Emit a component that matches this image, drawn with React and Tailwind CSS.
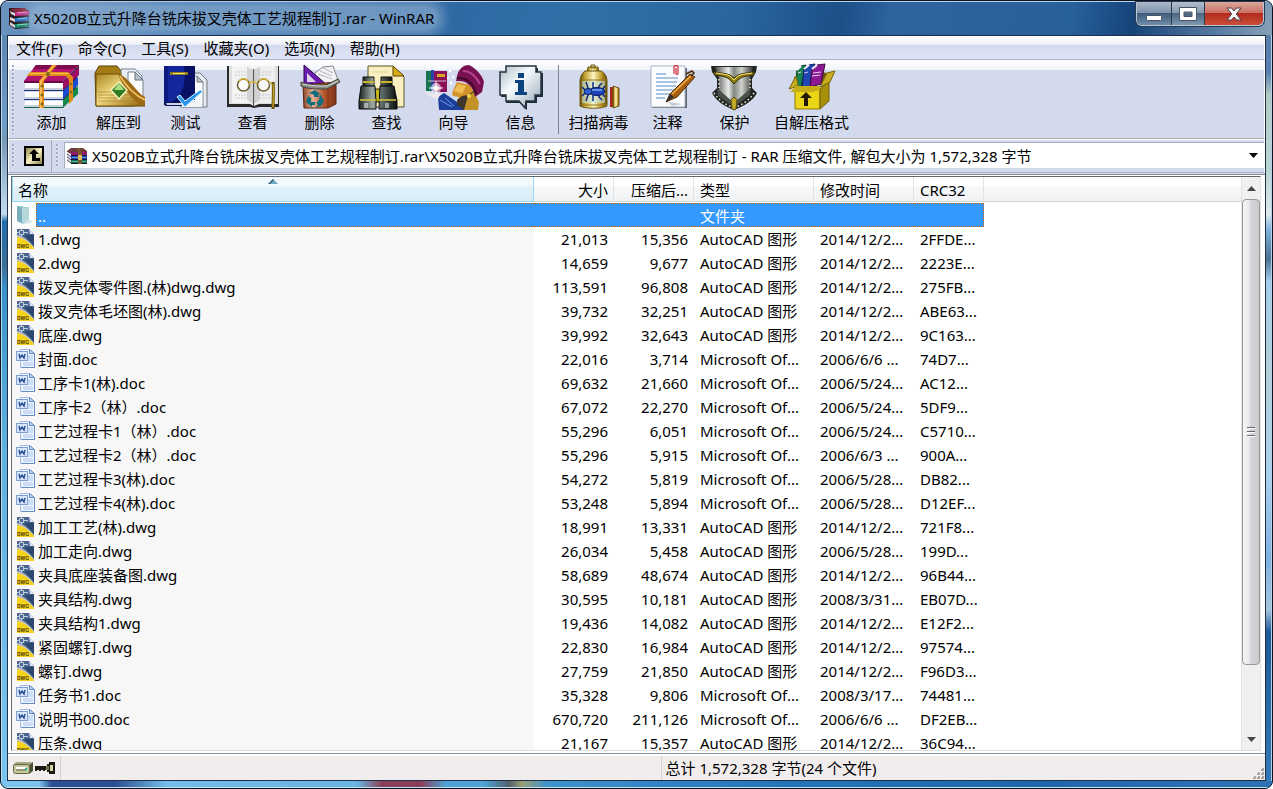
const ARCHIVE = "X5020B立式升降台铣床拔叉壳体工艺规程制订";

const menus = ["文件(F)", "命令(C)", "工具(S)", "收藏夹(O)", "选项(N)", "帮助(H)"];

const CAD = "AutoCAD 图形";
const WORD = "Microsoft Of...";

const files = [
  ["1.dwg", "21,013", "15,356", CAD, "2014/12/2...", "2FFDE..."],
  ["2.dwg", "14,659", "9,677", CAD, "2014/12/2...", "2223E..."],
  ["拨叉壳体零件图.(林)dwg.dwg", "113,591", "96,808", CAD, "2014/12/2...", "275FB..."],
  ["拨叉壳体毛坯图(林).dwg", "39,732", "32,251", CAD, "2014/12/2...", "ABE63..."],
  ["底座.dwg", "39,992", "32,643", CAD, "2014/12/2...", "9C163..."],
  ["封面.doc", "22,016", "3,714", WORD, "2006/6/6 ...", "74D7..."],
  ["工序卡1(林).doc", "69,632", "21,660", WORD, "2006/5/24...", "AC12..."],
  ["工序卡2（林）.doc", "67,072", "22,270", WORD, "2006/5/24...", "5DF9..."],
  ["工艺过程卡1（林）.doc", "55,296", "6,051", WORD, "2006/5/24...", "C5710..."],
  ["工艺过程卡2（林）.doc", "55,296", "5,915", WORD, "2006/6/3 ...", "900A..."],
  ["工艺过程卡3(林).doc", "54,272", "5,819", WORD, "2006/5/28...", "DB82..."],
  ["工艺过程卡4(林).doc", "53,248", "5,894", WORD, "2006/5/28...", "D12EF..."],
  ["加工工艺(林).dwg", "18,991", "13,331", CAD, "2014/12/2...", "721F8..."],
  ["加工走向.dwg", "26,034", "5,458", CAD, "2006/5/28...", "199D..."],
  ["夹具底座装备图.dwg", "58,689", "48,674", CAD, "2014/12/2...", "96B44..."],
  ["夹具结构.dwg", "30,595", "10,181", CAD, "2008/3/31...", "EB07D..."],
  ["夹具结构1.dwg", "19,436", "14,082", CAD, "2014/12/2...", "E12F2..."],
  ["紧固螺钉.dwg", "22,830", "16,984", CAD, "2014/12/2...", "97574..."],
  ["螺钉.dwg", "27,759", "21,850", CAD, "2014/12/2...", "F96D3..."],
  ["任务书1.doc", "35,328", "9,806", WORD, "2008/3/17...", "74481..."],
  ["说明书00.doc", "670,720", "211,126", WORD, "2006/6/6 ...", "DF2EB..."],
  ["压条.dwg", "21,167", "15,357", CAD, "2014/12/2...", "36C94..."],
];

const tools = [
  { label: "添加", icon: AddIcon, width: "w-[67px]" },
  { label: "解压到", icon: ExtractIcon, width: "w-[67px]" },
  { label: "测试", icon: TestIcon, width: "w-[67px]" },
  { label: "查看", icon: ViewIcon, width: "w-[67px]" },
  { label: "删除", icon: DeleteIcon, width: "w-[67px]" },
  { label: "查找", icon: FindIcon, width: "w-[67px]" },
  { label: "向导", icon: WizardIcon, width: "w-[67px]" },
  { label: "信息", icon: InfoIcon, width: "w-[67px]" },
];

const extraTools = [
  { label: "扫描病毒", icon: VirusIcon, width: "w-[71px]" },
  { label: "注释", icon: CommentIcon, width: "w-[67px]" },
  { label: "保护", icon: ProtectIcon, width: "w-[67px]" },
  { label: "自解压格式", icon: SfxIcon, width: "w-[87px]" },
];

export default function App() {
  return (
    <div className="h-screen bg-white">
      <div className="flex h-full flex-col overflow-hidden rounded-lg border border-[#0b1420] bg-[#2a659f] font-['Noto_Sans','Noto_Sans_CJK_SC',sans-serif] text-[15px] leading-6 text-black">
        <TitleBar />
        <div className="flex min-h-0 flex-1">
          <div className="w-1.5 border-l border-[#b9dcf2] bg-[linear-gradient(180deg,#5d86b3_0%,#6f9cc6_12%,#7899b5_14%,#c3dbee_24%,#1f6dab_25%,#3e6f94_31%,#3a90c8_34%,#5fb1de_55%,#7cc3ee_100%)]" />
          <Client />
          <div className="w-1.5 border-r border-[#b5d0e6] bg-[linear-gradient(180deg,#5b80ab_0%,#5a7fb0_5%,#b2cbc4_8%,#b9d5d4_18%,#dfe9ea_24%,#7fb4dc_26%,#4d7391_30%,#a5cdea_33%,#b2cfd6_45%,#a9cfec_60%,#7fb0e0_70%,#a5c5dc_77%,#1c5a98_80%,#3478b8_100%)]" />
        </div>
        <div className="h-[7px] shrink-0 border-b border-[#c5e2f3] bg-[linear-gradient(90deg,#7cc3ee_0%,#7cc3ee_3%,#2c4e92_4%,#2c4e92_9%,#74bde8_13%,#68b5e0_28%,#8a3f58_30%,#8a3f58_33%,#4ea4d6_35%,#4ea4d6_38%,#555f6a_40%,#9a9f77_41%,#3d93cb_43%,#2474b9_62%,#1f67ab_82%,#2f72b4_100%)]" />
      </div>
    </div>
  );
}

function TitleBar() {
  return (
    <header className="flex h-[34px] shrink-0 items-start border-t border-[#bcd3e8] bg-[linear-gradient(100deg,#6c93bf_0%,#5d8abb_4%,#3e75ae_14%,#2e69a4_36%,#2f70a9_45%,#2a659f_58%,#1d4f88_66%,#2e639f_70%,#28609c_84%,#164379_89%,#5d7fa5_96%,#86a0b8_100%)]">
      <div className="flex h-8 min-w-0 flex-1 items-center pl-2">
        <BooksIcon />
        <h1 className="truncate rounded-xl bg-[#a7c2dc]/50 pl-1 pr-1 shadow-[0_0_12px_6px_rgba(167,194,220,0.5)]">{ARCHIVE}.rar - WinRAR</h1>
      </div>
      <div className="mr-2 flex h-6 overflow-hidden rounded-b-md border border-t-0 border-[#b9c7d6] shadow-[0_0_0_1px_#26394f]">
        <button aria-label="最小化" className="flex w-[35px] items-center justify-center border-r border-[#26394f] bg-[linear-gradient(180deg,#aab9c9_0%,#7f95ad_46%,#3f5b7b_50%,#6f8ca9_100%)]">
          <svg width="18" height="18" viewBox="0 0 18 18"><rect x="1.500" y="10.500" width="15" height="5" rx="1" fill="#fff" stroke="#4a5668" /></svg>
        </button>
        <button aria-label="最大化" className="flex w-[33px] items-center justify-center border-r border-[#26394f] bg-[linear-gradient(180deg,#b3c0cd_0%,#8598ad_46%,#4b6582_50%,#7f98b0_100%)]">
          <svg width="18" height="16" viewBox="0 0 18 16"><path d="M.5 1.500h17v13H.5zM5 6v4.500h8V6z" fill="#fff" fillRule="evenodd" stroke="#4a5668" /></svg>
        </button>
        <button aria-label="关闭" className="flex w-[58px] items-center justify-center bg-[linear-gradient(180deg,#dba79c_0%,#cb7163_46%,#b32b1c_50%,#c94f3a_100%)]">
          <svg width="16" height="16" viewBox="0 0 16 16"><path d="M1 2h4.500L8 5l2.500-3H15l-4.700 6L15 14h-4.500L8 11l-2.500 3H1l4.700-6z" fill="#f7f7f7" stroke="#52424a" /></svg>
        </button>
      </div>
    </header>
  );
}

function Client() {
  return (
    <div className="flex min-w-0 flex-1 flex-col border border-[#1d3048] bg-[#d4daed]">
      <nav className="flex h-6 shrink-0 gap-[15px] border-x border-b border-x-white border-b-[#aab1cb] bg-[linear-gradient(180deg,#ffffff_0%,#eef1f8_36%,#d4daed_40%,#e0e5f5_100%)] pl-[7px]">
        {menus.map((name) => (
          <button key={name} className="leading-6">{name}</button>
        ))}
      </nav>
      <Toolbar />
      <AddressBar />
      <FileList />
      <StatusBar />
    </div>
  );
}

function Grip() {
  return <div className="my-1 w-1 shrink-0 bg-[radial-gradient(circle_at_1px_1px,#a3abc4_1px,#ffffff_1px,transparent_2px)] bg-[length:4px_4px]" />;
}

function Toolbar() {
  return (
    <div className="flex h-[79px] shrink-0 border-x border-b border-t border-x-white border-b-[#a9a9ae] border-t-white bg-[linear-gradient(180deg,#ffffff_0%,#f0f4fa_11%,#d4daed_12%,#d4daed_100%)] pl-[3px]" role="toolbar">
      <Grip />
      <div className="w-0.5" />
      {tools.map((tool) => <ToolButton key={tool.label} {...tool} />)}
      <div className="mx-1 my-1 w-px bg-[#7e838f]" />
      {extraTools.map((tool) => <ToolButton key={tool.label} {...tool} />)}
    </div>
  );
}

function ToolButton({ label, icon: Icon, width }) {
  return (
    <button className={`flex shrink-0 flex-col items-center pt-[3px] ${width}`}>
      <svg width="56" height="46" viewBox="0 0 56 46" overflow="visible" aria-hidden="true">
        <Icon />
      </svg>
      <span className="whitespace-nowrap leading-6">{label}</span>
    </button>
  );
}

function AddressBar() {
  return (
    <div className="flex h-[34px] shrink-0 border border-b-[#aab1cb] border-x-white border-t-white pl-[3px]">
      <Grip />
      <div className="flex w-9 items-center justify-center border-r border-[#a9a9b4]">
        <button aria-label="向上一级" className="h-5 w-5 border-2 border-black bg-[linear-gradient(135deg,#8b8446,#f7f1c4,#8b8446)]">
          <svg width="16" height="16" viewBox="0 0 16 16"><path d="M8 1L3 6h3v7h8v-3h-4V6h3z" fill="#000" /></svg>
        </button>
      </div>
      <div className="ml-1 flex"><Grip /></div>
      <label className="relative mb-1 ml-1 mt-0.5 flex min-w-0 flex-1 items-center border-l border-t border-[#a8aec2] bg-white pl-0.5">
        <span className="shrink-0"><ArchiveIcon /></span>
        <select className="h-full min-w-0 flex-1 appearance-none bg-white pl-1 pr-6 leading-6" aria-label="路径">
          <option>{`${ARCHIVE}.rar\\${ARCHIVE} - RAR 压缩文件, 解包大小为 1,572,328 字节`}</option>
        </select>
        <svg className="pointer-events-none absolute right-1.5" width="9" height="5" viewBox="0 0 9 5"><path d="M0 0h9L4.500 5z" /></svg>
      </label>
    </div>
  );
}

function FileList() {
  return (
    <main className="mt-px flex min-h-0 flex-1 border-t border-[#8a8f98] bg-white pb-0.5 pl-[3px] pr-1 pt-px">
      <div className="flex min-w-0 flex-1 border border-[#63676e] border-b-[#dedede] border-r-[#e3e3e3]">
        <div className="min-w-0 flex-1 overflow-hidden bg-[linear-gradient(90deg,#f7f7f7_522px,#ffffff_522px)]">
          <table className="w-full table-fixed border-collapse">
            <colgroup>
              <col className="w-[522px]" />
              <col className="w-[80px]" />
              <col className="w-[80px]" />
              <col className="w-[120px]" />
              <col className="w-[100px]" />
              <col className="w-[70px]" />
              <col />
            </colgroup>
            <thead>
              <tr className="text-left">
                <th className="relative bg-white p-0 pb-px font-normal">
                  <div className="h-[25px] border-x border-b border-[#96d9f9] bg-[linear-gradient(180deg,#f2f9fc_0%,#f2f9fc_38%,#e1f1f9_40%,#d8ecf6_100%)] pl-[5px] leading-[26px]">名称</div>
                  <svg className="absolute left-64 top-0.5" width="10" height="5" viewBox="0 0 10 5"><path d="M0 5L5 0l5 5z" fill="#6bacc8" /><path d="M0 5L5 0l1 1-4 4z" fill="#3c5e72" /></svg>
                </th>
                <HeadCell className="pr-[5px] text-right">大小</HeadCell>
                <HeadCell className="pr-[5px] text-right">压缩后...</HeadCell>
                <HeadCell className="pl-1.5">类型</HeadCell>
                <HeadCell className="pl-1.5">修改时间</HeadCell>
                <HeadCell className="pl-1.5">CRC32</HeadCell>
                <td className="bg-white p-0 pb-px"><div className="h-[25px] border-b border-[#d5d5d5] bg-[linear-gradient(180deg,#ffffff_0%,#ffffff_38%,#f7f8fa_40%,#f1f2f4_100%)]" /></td>
              </tr>
            </thead>
            <tbody>
              <tr className="text-white">
                <td className="p-0">
                  <div className="flex h-6 bg-white pl-1">
                    <span className="w-5 pt-0.5"><FolderIcon /></span>
                    <span className="flex-1 border border-r-0 border-dotted border-[#cc6600] bg-[#3399ff] pl-px leading-6">..</span>
                  </div>
                </td>
                <SelectedCell />
                <SelectedCell />
                <SelectedCell>文件夹</SelectedCell>
                <SelectedCell />
                <SelectedCell last />
                <td />
              </tr>
              {files.map(([name, size, packed, type, date, crc]) => (
                <tr key={name} className="h-6 whitespace-nowrap">
                  <td className="p-0">
                    <div className="flex h-6 pl-1">
                      <span className="w-5 pt-0.5">{name.endsWith(".dwg") ? <DwgIcon /> : <DocIcon />}</span>
                      <span className="pl-0.5">{name}</span>
                    </div>
                  </td>
                  <td className="p-0 pr-1.5 text-right">{size}</td>
                  <td className="p-0 pr-1.5 text-right">{packed}</td>
                  <td className="p-0 pl-1.5">{type}</td>
                  <td className="p-0 pl-1.5">{date}</td>
                  <td className="p-0 pl-1.5">{crc}</td>
                  <td />
                </tr>
              ))}
            </tbody>
          </table>
        </div>
        <ScrollBar />
      </div>
    </main>
  );
}

function HeadCell({ children, className }) {
  return (
    <th className="bg-white p-0 pb-px font-normal">
      <div className={`h-[25px] whitespace-nowrap border-b border-r border-b-[#d5d5d5] border-r-[#e2e3e5] bg-[linear-gradient(180deg,#ffffff_0%,#ffffff_38%,#f7f8fa_40%,#f1f2f4_100%)] leading-[26px] ${className}`}>{children}</div>
    </th>
  );
}

function SelectedCell({ children, last = false }) {
  return (
    <td className="p-0">
      <div className={`h-6 border-y border-dotted border-[#cc6600] bg-[#3399ff] pl-1.5 leading-6 ${last ? "border-r" : ""}`}>{children}</div>
    </td>
  );
}

function ScrollBar() {
  return (
    <div className="flex w-[19px] shrink-0 flex-col border-l border-[#e3e3e3] bg-[#f0f0f0]">
      <button aria-label="向上滚动" className="flex h-[22px] shrink-0 items-center justify-center">
        <svg width="9" height="5" viewBox="0 0 9 5"><path d="M0 5L4.500 0 9 5z" fill="#444" /></svg>
      </button>
      <div className="flex min-h-0 flex-1 flex-col">
        <div className="flex basis-[88%] items-center justify-center rounded-sm border border-[#979797] bg-[linear-gradient(90deg,#f6f6f6_0%,#e9e9ea_40%,#d5d5d9_45%,#c9c9cf_100%)]">
          <svg width="8" height="10" viewBox="0 0 8 10"><path d="M0 .5h8M0 4.500h8M0 8.500h8" stroke="#666" /><path d="M0 1.500h8M0 5.500h8M0 9.500h8" stroke="#fff" /></svg>
        </div>
      </div>
      <button aria-label="向下滚动" className="flex h-[22px] shrink-0 items-center justify-center">
        <svg width="9" height="5" viewBox="0 0 9 5"><path d="M0 0h9L4.500 5z" fill="#444" /></svg>
      </button>
    </div>
  );
}

function StatusBar() {
  return (
    <footer className="flex h-[27px] shrink-0 border-t border-[#8a8f98] bg-[#f0edec]">
      <div className="flex flex-1 border-t-2 border-white">
        <div className="flex w-[53px] items-center gap-0.5 border-r border-[#d5d2d1] pl-[5px]">
          <svg className="shrink-0" width="20" height="14" viewBox="0 0 20 14"><path d="M3 1h16l-3 3H0z" fill="#a5a883" /><path d="M16 4l4-3v9l-4 3z" fill="#4f5335" /><rect x=".5" y="3.500" width="16" height="9" rx="2" fill="#c5c9a0" stroke="#62663f" /><path d="M3 7h10" stroke="#fff" strokeWidth="2" /><path d="M3 9h10" stroke="#62663f" /><path d="M12 8h2" stroke="#1fb39c" strokeWidth="2" /></svg>
          <svg className="shrink-0" width="20" height="12" viewBox="0 0 20 12"><path d="M0 4h12v4h-2v1H8V8H6v1H4V8H2v1H0z" fill="#1b1a10" /><path d="M12 2h2V0h6v12h-6v-2h-2z" fill="#1b1a10" /><path d="M15 3h3v6h-3z" fill="#d9d3a8" /><path d="M11 4h3v4h-3z" fill="#777250" /></svg>
        </div>
        <div className="flex-1 basis-0 border-r border-[#d5d2d1]" />
        <div className="flex flex-1 basis-0 items-end justify-between pl-1">
          <span>总计 1,572,328 字节(24 个文件)</span>
          <svg width="12" height="12" viewBox="0 0 12 12" fill="#aaa5a4"><path d="M8 0h3v3H8zM4 4h3v3H4zM8 4h3v3H8zM0 8h3v3H0zM4 8h3v3H4zM8 8h3v3H8z" /><path d="M8 0h1v1H8zM4 4h1v1H4zM8 4h1v1H8zM0 8h1v1H0zM4 8h1v1H4zM8 8h1v1H8z" fill="#fff" /></svg>
        </div>
      </div>
    </footer>
  );
}

/* Small icons */

function BooksIcon() {
  return (
    <svg className="shrink-0" width="21" height="21" viewBox="0 0 21 21" aria-hidden="true">
      <path d="M0 0l15 0 5 3v17l-14 1-6-4z" fill="#2a1a20" />
      <path d="M1 1l14-1 5 3L6 4z" fill="#8a2a3a" />
      <path d="M6 4l14-1v4L6 8z" fill="#c8257f" />
      <path d="M8 5l10-1" stroke="#f4a0cc" />
      <path d="M6 10l14-1v4L6 14z" fill="#1f6cb8" />
      <path d="M8 11l10-1" stroke="#8cc9f2" />
      <path d="M6 16l14-1v4L6 20z" fill="#15876c" />
      <path d="M8 17l10-1" stroke="#7be0c0" />
      <path d="M1 3l5 2v3L2 6zm0 6l5 2v3l-5-2zm0 5l5 3v3l-5-3z" fill="#d9d1d3" />
    </svg>
  );
}

function ArchiveIcon() {
  return (
    <svg width="21" height="16" viewBox="0 0 21 16" aria-hidden="true">
      <path d="M0 3l4-3h12l4 3v3H4L0 4z" fill="#6d3a3e" />
      <path d="M4 4h16v3H4z" fill="#8e1a6b" />
      <path d="M4 7h16v4H4z" fill="#2346b8" />
      <path d="M4 11h16v5H4z" fill="#147247" />
      <path d="M0 4l4 2v9l-4-3z" fill="#e9e4ec" />
      <path d="M0 6l4 3M0 9l4 3M0 12l4 3" stroke="#4b4566" />
      <path d="M4 7.500h16M4 11.500h16M4 15.500h16" stroke="#1a1430" />
      <path d="M5 9.500h14M5 13.500h14" stroke="#69c2e5" strokeWidth=".7" />
      <path d="M9 0h4l2 4v12h-4V4z" fill="#7b5930" />
      <path d="M11 7h4v5h-4z" fill="#e3ba5b" />
    </svg>
  );
}

function FolderIcon() {
  return (
    <svg width="17" height="20" viewBox="0 0 17 20" aria-hidden="true">
      <path d="M1 1h5l1 1h5v14l-5 3-6-3z" fill="#8fbfca" />
      <path d="M5 3l8-1v14l-6 3-2-2z" fill="#b4d7dc" />
      <path d="M1 1l5 3v14l-5-2z" fill="#78aebb" />
      <path d="M13 14l3 2-1 2-7 1z" fill="#d7e7ea" />
    </svg>
  );
}

function DwgIcon() {
  return (
    <svg width="19" height="20" viewBox="0 0 19 20" aria-hidden="true">
      <path d="M1 0h12l5 5v15H1z" fill="#4a6690" />
      <path d="M13 0l5 5h-4z" fill="#dfe6ef" />
      <path d="M8 6l10 0v11z" fill="#2c4670" />
      <path d="M1 6c5 0 12 6 17 12v2H1z" fill="#b9c2cc" />
      <path d="M1 8c6 1 12 5 17 11v1H1z" fill="#f7d21c" />
      <path d="M3.500 1.500h4v4h-4zM1 3.500h2M8 3.500h4M5.500 0v1M5.500 6v2" fill="none" stroke="#c3d1e3" />
      <text x="1" y="19" fontSize="5" fontWeight="700" fontFamily="Liberation Sans, sans-serif" fill="#4a3c00">DWG</text>
    </svg>
  );
}

function DocIcon() {
  return (
    <svg width="19" height="20" viewBox="0 0 19 20" aria-hidden="true">
      <path d="M4.500.5h9l5 4v14h-14z" fill="#eef5ff" stroke="#a3bbdf" />
      <path d="M13.500.5v4h5z" fill="#c2d6f2" stroke="#6489c6" />
      <path d="M18.500 5v13.500h-13" fill="none" stroke="#6489c6" />
      <path d="M12 7h5M12 9h5M12 11h5M7 14h10M7 16h10" stroke="#a9c3ea" />
      <rect x=".5" y="2.500" width="11" height="9" fill="#dbe8fb" stroke="#7f9fd2" />
      <path d="M3 5l1 4 2-3 2 3 1-4" fill="none" stroke="#2b4f9e" strokeWidth="1.500" />
    </svg>
  );
}

/* Toolbar icons, all drawn on a 56 x 46 canvas */

function AddIcon() {
  return (
    <g>
      <path d="M39 17L55 1v9l-2 3v7l-1 4v6L39 44z" fill="#2b2b4a" />
      <path d="M39 18L55 3v8L39 26z" fill="#a10d64" />
      <path d="M39 27L54 13v8L39 35z" fill="#1a4bd0" />
      <path d="M39 36L54 22v8L39 43z" fill="#128a48" />
      <path d="M12 1h43L39 17H0z" fill="#b0126f" />
      <path d="M12 1h43l-4 4H9z" fill="#7e0a50" />
      <path d="M0 17h39v2H0z" fill="#6c0844" />
      <path d="M1 19h38v7H1zM1 28h38v7H1zM1 37h38v6H1z" fill="#fff" />
      <path d="M1 24h38v2H1zM1 33h38v2H1zM1 41h38v2H1z" fill="#c9d0dc" />
      <path d="M0 26h39v1H0z" fill="#18306f" />
      <path d="M0 35h39v1H0z" fill="#1b3d86" />
      <path d="M0 43h39v1H0z" fill="#0b6a3c" />
      <path d="M15 17L28 1h5L20 17v27h-5z" fill="#e28a18" />
      <path d="M16 17L29 1h2L18 17v27h-2z" fill="#f9bd5a" />
      <path d="M6 8h38l5 5v23l-4 4V16l-3-4H3z" fill="#e28a18" />
      <path d="M6 9h38l1 1H5z" fill="#f9bd5a" />
      <g fill="#7b6a20"><circle cx="24" cy="10" r="2" /><circle cx="18" cy="22" r="1.500" /><circle cx="18" cy="31" r="1.500" /><circle cx="18" cy="40" r="1.500" /><circle cx="47" cy="20" r="1.300" /><circle cx="47" cy="28" r="1.300" /></g>
    </g>
  );
}

function ExtractIcon() {
  return (
    <g>
      <defs>
        <linearGradient id="folderGold" x1="0" y1="0" x2="1" y2="1"><stop offset="0" stopColor="#a8841c" /><stop offset=".45" stopColor="#f4dc86" /><stop offset="1" stopColor="#8a5d06" /></linearGradient>
      </defs>
      <path d="M4 9l4-7h18l4 5h14v35H5z" fill="#a57b16" stroke="#5c4309" />
      <path d="M30 5h14l7 7v28H32z" fill="#e9eef4" stroke="#77828d" />
      <path d="M37 8h7l8 8v24H37z" fill="#f9fbfd" stroke="#77828d" />
      <path d="M44 8v8h8z" fill="#b8c4cf" stroke="#66727d" />
      <path d="M5 10h23l12 19 14 13H5z" fill="url(#folderGold)" stroke="#6d4e0b" />
      <path d="M27 10c6 1 12 8 17 14s8 8 10 9v9c-11-3-19-13-27-32z" fill="#9d6a16" />
      <path d="M29 12c6 10 14 19 25 24" fill="none" stroke="#f0c360" strokeWidth="1.500" />
      <path d="M7 34h34M7 37h40M7 31h31M7 28h14" stroke="#9b781a" strokeOpacity=".6" />
      <path d="M28 18l8 8-8 9-8-9z" fill="#2f7b1f" stroke="#f6f0b8" strokeWidth="1.500" />
      <path d="M28 19l5 7h-10z" fill="#a6dd80" />
    </g>
  );
}

function TestIcon() {
  return (
    <g>
      <path d="M32 9h10l7 7v27H24V30z" fill="#e7ebef" stroke="#70767d" />
      <path d="M32 12h7l6 6v25H22V30z" fill="#f9fafb" stroke="#8a9199" />
      <path d="M39 12v6h6z" fill="#bcc4cc" stroke="#70767d" />
      <path d="M6 2h31v36H8l-2 2z" fill="#0b1a80" />
      <path d="M10 2h27v36H10z" fill="#13269a" />
      <path d="M26 2h11v36H14c12-8 14-18 12-36z" fill="#071062" />
      <path d="M8 39h29v2H8z" fill="#cfd5e0" />
      <path d="M6 38v3l2 1h29v-1H9l-1-2h29v-1z" fill="#09145e" />
      <path d="M24 36h20v7H24z" fill="#f3f6f9" />
      <path d="M12 8h18v3H12z" fill="#8c7b22" /><path d="M15 9h12v1H15z" fill="#f2e45e" />
      <path d="M19 33l3-2 5 6 15-11 3 1-18 16z" fill="#2a93ec" stroke="#d8f1ff" />
    </g>
  );
}

function ViewIcon() {
  return (
    <g>
      <path d="M2 2h3v38h21l3 2 3-2h20V2h2v41H34l-5 1-4-1H2z" fill="#2b2b2b" />
      <path d="M4 2h21l4 3 4-3h20v38H34l-5 2-4-2H4z" fill="#dedede" />
      <path d="M7 2h18l3 3v36l-4-2H7z" fill="#f3f3f3" />
      <path d="M50 2H33l-3 3v36l4-2h16z" fill="#efefef" />
      <path d="M22 3l6 3v34l-6-4zM35 3l-6 3v34l6-4z" fill="#bdbdbd" fillOpacity=".6" />
      <path d="M28.500 5v37" stroke="#555" />
      <path d="M10 8h13M10 11h14M10 31h13M10 34h12M34 8h13M34 11h12M34 31h11M34 34h12" stroke="#c9c9cf" strokeDasharray="2 1" />
      <g fill="#fff" fillOpacity=".7" stroke="#6b5c2a" strokeWidth="1.500"><circle cx="18.500" cy="21" r="6" /><circle cx="38.500" cy="21" r="6" /></g>
      <path d="M14 17c2-3 7-3 9 0M34 17c2-3 7-3 9 0M24 20c2-3 6-3 8 0M44 19h4" fill="none" stroke="#d9b633" strokeWidth="1.500" />
      <path d="M48 18c1 6 0 16 0 27" fill="none" stroke="#6a5209" strokeWidth="3" />
      <path d="M48 20c1 6 0 14 0 23" fill="none" stroke="#e0b936" />
    </g>
  );
}

function DeleteIcon() {
  return (
    <g>
      <defs>
        <linearGradient id="binCopper" x1="0" x2="1"><stop offset="0" stopColor="#8c4426" /><stop offset=".3" stopColor="#e8b397" /><stop offset=".65" stopColor="#b0532c" /><stop offset="1" stopColor="#7e3316" /></linearGradient>
      </defs>
      <path d="M23 9l8-6 10-1 5 14-8 5-16-2z" fill="#f2f2f5" stroke="#85858d" />
      <path d="M28 7l12 5M26 10l14 5M31 4l10 5" stroke="#b4b4bd" />
      <path d="M12 1l23 20H12z" fill="#6c1bb0" stroke="#2c084f" />
      <path d="M15 9l9 9h-9z" fill="#dcd6ea" />
      <path d="M11 21l33-3v22l-8 4H12z" fill="url(#binCopper)" stroke="#5a2410" />
      <path d="M36 22v22" stroke="#7e3316" />
      <path d="M9 18c7 3 18 3 25 3l12-6 2 3-13 7c-11 0-20 0-26-3z" fill="#898d86" stroke="#404239" />
      <path d="M11 20c7 2 16 2 24 2l11-5" fill="none" stroke="#d7dad2" />
      <path d="M17 29l6-3 5 4-2 1 1 2-5 0 0-2-2-1zM28 30l4 7-3 5-5 1 2-3-2-1 3-3zM16 32l-2 6 6 5v-2h3v-3h-4v-3h1z" fill="#0d6d7e" />
    </g>
  );
}

function FindIcon() {
  return (
    <g>
      <defs>
        <linearGradient id="barrel" x1="0" x2="1"><stop offset="0" stopColor="#1b211f" /><stop offset=".35" stopColor="#9aa8a2" /><stop offset=".6" stopColor="#5b6b65" /><stop offset="1" stopColor="#0b0e0d" /></linearGradient>
      </defs>
      <path d="M9 2h25l11 11v30H9z" fill="#f9efc0" stroke="#5b5226" />
      <path d="M34 2v10h11z" fill="#d9ad16" stroke="#5b4407" />
      <path d="M13 8h16M13 36h28" stroke="#e2d592" />
      <path d="M16 25h6v13h-6z" fill="#c6b41f" stroke="#2a2704" />
      <path d="M4 13h11v9H4zM22 13h11v9H22z" fill="url(#barrel)" stroke="#111" />
      <path d="M4 18h11M22 18h11" stroke="#c9b32a" strokeWidth="2" />
      <path d="M2 22h14l1 15v8H0v-8zM21 22h14l3 15v8H20z" fill="url(#barrel)" stroke="#0c0c0c" />
      <path d="M1 36h16M20 36h17" stroke="#dbc53d" strokeWidth="1.500" />
      <path d="M5 39h4v5H5zM26 39h4v5h-4z" fill="#d8d8d8" fillOpacity=".6" />
    </g>
  );
}

function WizardIcon() {
  return (
    <g>
      <path d="M0 7h5v20H0z" fill="#147550" /><path d="M5 6h3v21H5z" fill="#2742a2" />
      <path d="M8 7h13v21H8z" fill="#8a1158" /><path d="M11 10h8v3h-8z" fill="#d9a929" />
      <path d="M2 17h18" stroke="#d7b7cb" />
      <path d="M12 33l6-4 13 9 12-6 8 6 1 8H13z" fill="#1c3f9c" />
      <path d="M14 36l12 7M19 34l9 8" stroke="#6e9bea" />
      <path d="M26 29l5-11 13 3 5 10-6 11-12-5 2-4-6-1z" fill="#d49329" />
      <path d="M28 27l4-7 8 2-4 8z" fill="#efbe58" />
      <path d="M31 36l5-4 6-1 7-5-3 15-8 5-7-5z" fill="#3f362c" />
      <path d="M42 32l6-4 5 10-1 8H38z" fill="#c49328" />
      <path d="M31 12c2-8 7-11 12-11 5 2 13 9 15 17l-2 10-7 5c-2-11-8-17-19-16z" fill="#77114f" />
      <path d="M37 7c6-1 13 5 17 13" fill="none" stroke="#b64491" strokeWidth="2" />
      <path d="M31 14c10-1 17 6 19 16" fill="none" stroke="#3e0827" strokeWidth="2" />
      <circle cx="43" cy="32" r="2" fill="#f2db50" />
      <circle cx="10" cy="24" r="5" fill="#fff" fillOpacity=".6" />
      <circle cx="10" cy="24" r="2.500" fill="#fff" />
      <path d="M10 17v14M3 24h14" stroke="#fff" />
      <path d="M-2 27l9 3 8-1-3 6-7-2z" fill="#eee8ee" />
      <g fill="#fff"><circle cx="18" cy="4" r="1.500" /><circle cx="24" cy="7" r="1.500" /><circle cx="27" cy="13" r="1.200" /><circle cx="25" cy="19" r="1.500" /><circle cx="13" cy="3" r="1" /><circle cx="22" cy="14" r="1" /></g>
    </g>
  );
}

function InfoIcon() {
  return (
    <g>
      <defs>
        <linearGradient id="bubble" x1="0" y1="0" x2="1" y2="1"><stop offset="0" stopColor="#a8bac7" /><stop offset=".4" stopColor="#f8fbfd" /><stop offset="1" stopColor="#93a8b7" /></linearGradient>
      </defs>
      <path d="M14 4h31v5h5v24h-6v6H34v7l-7-7H13v-6H8z" fill="#1c2c38" />
      <path d="M13 2h30v6h5v23h-6v6H33l-1 7-6-7H13v-6H7V8h6z" fill="url(#bubble)" stroke="#26353f" strokeWidth="1.500" />
      <path d="M25 9h6v5h-6zM22 16h9v12h3v3H22v-3h3v-9h-3z" fill="#0b4280" />
    </g>
  );
}

function VirusIcon() {
  return (
    <g>
      <defs>
        <linearGradient id="canGold" x1="0" x2="1"><stop offset="0" stopColor="#5f4a0a" /><stop offset=".18" stopColor="#c4a12e" /><stop offset=".5" stopColor="#fbf7c6" /><stop offset=".78" stopColor="#c6a02c" /><stop offset="1" stopColor="#5f4a0a" /></linearGradient>
      </defs>
      <path d="M17 3h10l1 5H16zM20 1h4v3h-4z" fill="url(#canGold)" stroke="#6f5a16" />
      <path d="M14 7h16c4 2 6 6 6 10v25c-5 3-22 3-27 0V17c0-4 2-8 5-10z" fill="url(#canGold)" stroke="#6c5610" />
      <path d="M11 17h23v22H11z" fill="#bde5f0" fillOpacity=".55" />
      <path d="M10 16h26M10 41h26" stroke="#927922" />
      <path d="M15 18l2 6 3 2M22 18v5l2 3M31 19l-3 3v4M34 22l-3 4M15 37l2-6 3-2M22 37v-5l2-3M31 36l-3-3v-4M34 33l-3-4M14 26l-3-3M14 29l-3 3" fill="none" stroke="#102a7f" strokeWidth="1.500" />
      <ellipse cx="26" cy="27.500" rx="8" ry="4" fill="#1b45bb" stroke="#0b1a61" />
      <ellipse cx="17" cy="27.500" rx="4" ry="3" fill="#2d61d6" stroke="#0b1a61" />
      <path d="M21 26h10" stroke="#82aaf4" strokeWidth="1.500" />
      <path d="M39 23h3v20h-3z" fill="#a72718" />
      <path d="M42 22l6 2v18l-6 2z" fill="url(#canGold)" stroke="#6c5610" />
    </g>
  );
}

function CommentIcon() {
  return (
    <g>
      <path d="M13 4h34v40H12z" fill="#5f6570" />
      <path d="M11 2h34v41H11z" fill="#fbfcfe" stroke="#a9b3bf" />
      <path d="M16 10h10M16 14h22M16 18h21M16 22h20M16 26h18M16 30h14M16 34h9" stroke="#8fb0d6" strokeWidth="1.300" />
      <path d="M34 10V3c0-2 4-2 4 0v6c0 2-2 2-2 0V4" fill="none" stroke="#cf3747" strokeWidth="1.300" />
      <path d="M26 38l4-8L50 10l5 3-18 20z" fill="#a95f11" stroke="#4e2a08" />
      <path d="M32 30L51 12" stroke="#f3b44c" strokeWidth="1.500" />
      <path d="M26 38l4-8 4 3z" fill="#30343a" />
      <path d="M46 10l6-3 2 2-3 3" fill="none" stroke="#4e2a08" strokeWidth="1.500" />
      <path d="M28 38l14 2-10 2z" fill="#8f98a5" fillOpacity=".5" />
    </g>
  );
}

function ProtectIcon() {
  return (
    <g>
      <defs>
        <linearGradient id="steel" x1="0" x2="1"><stop offset="0" stopColor="#4a4d4a" /><stop offset=".35" stopColor="#e9ebe8" /><stop offset=".5" stopColor="#838781" /><stop offset=".7" stopColor="#cfd2cc" /><stop offset="1" stopColor="#333633" /></linearGradient>
      </defs>
      <path d="M4 2h46l-1 6-4 7v9l5 5C46 37 37 42 27 46 17 42 9 37 5 29l5-5v-9L5 8z" fill="#22251f" />
      <path d="M8 3h38l-3 11v10c0 7-7 13-16 17-9-4-15-10-15-17V14z" fill="url(#steel)" />
      <path d="M10 24l17 15 17-15-1 7-16 12-16-11z" fill="#4c504b" />
      <path d="M6 8c7 1 13 1 17 3l4 3 4-3c4-2 10-2 17-3l-2 3c-6 1-10 1-14 4l-5 5-5-5C18 12 14 12 8 11z" fill="#8f7a13" stroke="#3b3205" />
      <path d="M9 9c6 1 10 1 14 3l4 4 4-4c4-2 8-2 14-3" fill="none" stroke="#f1e27a" />
      <path d="M24 36l3-3 3 3-1 9-2 1-2-1z" fill="#c2a928" stroke="#5c4c09" />
      <g fill="none" stroke="#eceee9" strokeDasharray="1.500 2.500" strokeWidth="1.500"><path d="M7 29c4 6 10 11 18 14M47 29c-4 6-10 11-18 14M12 15v9M43 15v9" /></g>
    </g>
  );
}

function SfxIcon() {
  return (
    <g>
      <path d="M10 13l27-5 13 2-7 9-32 6z" fill="#6d5a08" />
      <path d="M13 6l4-4 5-1-5 22h-6z" fill="#1a8251" stroke="#0a3c23" />
      <path d="M20 5l5-4 6-1-5 23h-8z" fill="#2246b0" stroke="#0d1e5a" />
      <path d="M28 5l5-4 8-1-4 20-11 3z" fill="#8b1a92" stroke="#3e0943" />
      <path d="M13 6l4-4M20 5l5-4M28 5l5-4" fill="none" stroke="#f1ecf6" strokeWidth="2" />
      <path d="M14 9l3-1M20 9l4-1M29 9l8-1M28 12l8-1" stroke="#e9ccf0" />
      <path d="M11 25h25v20H11z" fill="#ead616" stroke="#8d7b07" />
      <path d="M36 25l9-8v20l-9 8z" fill="#a68f0b" stroke="#6f5e05" />
      <path d="M11 23l-6 2 7-13 2 9z" fill="#c8ac21" stroke="#7b6707" />
      <path d="M12 22h24v4l-8 2H6z" fill="#c4ad16" />
      <path d="M36 23l7-14 8-2-5 11z" fill="#c8ac21" stroke="#7b6707" />
      <path d="M22 28l6 6h-4v8h-4v-8h-4z" fill="#241c02" />
    </g>
  );
}
